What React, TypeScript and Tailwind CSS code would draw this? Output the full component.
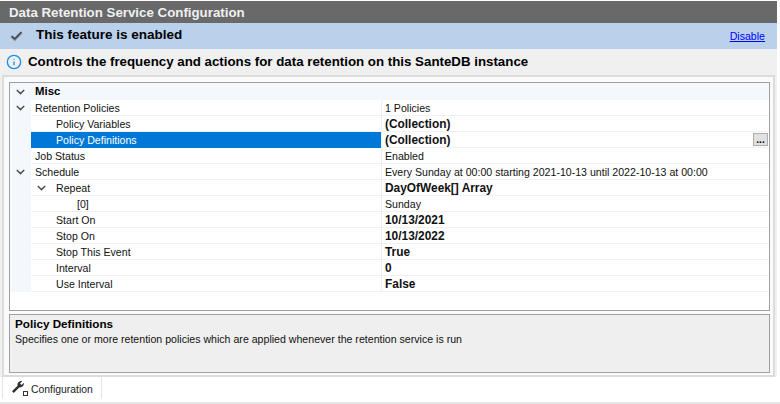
import { Info } from "lucide-react";

interface Row {
  label: string;
  value: string;
  indent: number;
  bold?: boolean;
  expander?: "gutter" | "inner";
  selected?: boolean;
  button?: boolean;
}

const rows: Row[] = [
  { label: "Retention Policies", value: "1 Policies", indent: 0, expander: "gutter" },
  { label: "Policy Variables", value: "(Collection)", indent: 1, bold: true },
  { label: "Policy Definitions", value: "(Collection)", indent: 1, bold: true, selected: true, button: true },
  { label: "Job Status", value: "Enabled", indent: 0 },
  { label: "Schedule", value: "Every Sunday at 00:00 starting 2021-10-13 until 2022-10-13 at 00:00", indent: 0, expander: "gutter" },
  { label: "Repeat", value: "DayOfWeek[] Array", indent: 1, bold: true, expander: "inner" },
  { label: "[0]", value: "Sunday", indent: 2 },
  { label: "Start On", value: "10/13/2021", indent: 1, bold: true },
  { label: "Stop On", value: "10/13/2022", indent: 1, bold: true },
  { label: "Stop This Event", value: "True", indent: 1, bold: true },
  { label: "Interval", value: "0", indent: 1, bold: true },
  { label: "Use Interval", value: "False", indent: 1, bold: true },
];

function Chevron({ className = "" }: { className?: string }) {
  return (
    <svg width="9" height="6" viewBox="0 0 9 6" className={className}>
      <path d="M0.8 1 L4.5 4.6 L8.2 1" fill="none" stroke="#505050" strokeWidth="1.5" />
    </svg>
  );
}

function PropertyRow({ row }: { row: Row }) {
  return (
    <div className="flex h-4 items-stretch">
      <div className="flex w-[21px] shrink-0 items-center justify-center bg-[#f4f7fc]">
        {row.expander === "gutter" && <Chevron />}
      </div>
      <div
        className={`relative flex w-[350px] shrink-0 items-center border-b pt-[1px] ${
          row.selected ? "border-[#0078d7] bg-[#0078d7] text-white" : "border-[#f0f0f0]"
        } ${row.indent === 0 ? "pl-[4px]" : row.indent === 1 ? "pl-[25px]" : "pl-[46px]"}`}
      >
        {row.expander === "inner" && <Chevron className="absolute top-[5px] left-[6px]" />}
        {row.label}
      </div>
      <div
        className={`relative flex flex-1 items-center border-b border-l border-[#f0f0f0] pl-[3px] ${
          row.bold ? "pt-[3px] text-[11.9px] font-bold" : "pt-[1px]"
        }`}
      >
        {row.value}
        {row.button && (
          <div className="absolute top-[1px] right-[1px] flex h-[13px] w-[15px] items-end justify-center border border-[#adadad] bg-[#e1e1e1] text-[10px] leading-[10px] font-bold text-black">
            ...
          </div>
        )}
      </div>
    </div>
  );
}

export default function App() {
  return (
    <div className="flex h-[404px] w-[780px] flex-col bg-white pt-[1px] font-['Liberation_Sans',sans-serif] text-[10.6px] leading-none text-[#111111]">
      <div className="flex h-[376px] w-[777px] shrink-0 flex-col bg-[#f0f0f0]">
        {/* Title */}
        <div className="flex h-[22px] shrink-0 items-center bg-[#696969] pt-[1px] pl-[9px] text-[13.3px] font-bold text-[#f0f0f0]">
          Data Retention Service Configuration
        </div>

        {/* Feature banner */}
        <div className="flex h-[26px] shrink-0 items-center bg-[#b9d1ea] pl-[10px]">
          <svg width="13" height="10" viewBox="0 0 13 10">
            <path d="M1.5 5.5 L4.8 8.5 L11.5 1.5" fill="none" stroke="#8d949c" strokeWidth="2.6" />
            <path d="M1.5 5 L4.8 7.8 L11.5 1" fill="none" stroke="#4c4c4c" strokeWidth="1.6" />
          </svg>
          <span className="mb-[2px] ml-[13px] text-[13.5px] font-bold text-black">This feature is enabled</span>
          <span className="mr-[12px] ml-auto text-[10.6px] text-[#0000ff] underline">Disable</span>
        </div>

        {/* Description */}
        <div className="flex h-[26px] shrink-0 items-center pl-[6px]">
          <Info size={16} strokeWidth={2} className="text-[#1c8ee6]" />
          <span className="ml-[6px] text-[13.3px] font-bold text-black">
            Controls the frequency and actions for data retention on this SanteDB instance
          </span>
        </div>

        {/* Panel */}
        <div className="mx-[2px] flex flex-1 flex-col border-2 border-[#dcdcdc] bg-[#fafafa] pt-[5px] pr-[3px] pb-[2px] pl-[5px]">
          <div className="h-[229px] shrink-0 border border-[#a0a0a0] bg-white">
            <div className="flex h-[17px] bg-[#f4f7fc]">
              <div className="flex w-[21px] shrink-0 items-center justify-center">
                <Chevron />
              </div>
              <div className="flex items-center pt-[1px] pl-[4px] text-[11.4px] font-bold text-black">Misc</div>
            </div>
            {rows.map((row) => (
              <PropertyRow key={row.label} row={row} />
            ))}
          </div>
          <div className="mt-[3px] h-[59px] shrink-0 border border-[#a0a0a0] bg-[#efefef] px-[5px] pt-[2px]">
            <div className="text-[11.7px] leading-[14px] font-bold text-black">Policy Definitions</div>
            <div className="mt-[2px] leading-[13px]">
              Specifies one or more retention policies which are applied whenever the retention service is run
            </div>
          </div>
        </div>
      </div>

      {/* Tab strip */}
      <div className="flex h-[27px] shrink-0 items-start border-b-2 border-[#e4e4e4]">
        <div className="ml-[2px] flex h-[22px] w-[100px] items-center border-r border-l border-[#e4e4e4] pl-[8px]">
          <div className="relative mb-[2px]">
            <svg width="14" height="14" viewBox="0 0 14 14" className="block">
              <path
                d="M1 11.2 L6.6 5.8 C6 3.4 7.6 1 10.4 1 L11.2 1.2 L9 3.4 L10.6 5 L12.8 2.8 C13.4 5.6 11 8 8.2 7.4 L2.8 13 Z"
                fill="#303030"
              />
            </svg>
            <div className="absolute -right-[3px] -bottom-[2px] h-[5px] w-[5px] border border-[#333333] bg-white" />
          </div>
          <span className="mt-[5px] ml-[6px] text-[10.4px] text-[#222222]">Configuration</span>
        </div>
      </div>
    </div>
  );
}
